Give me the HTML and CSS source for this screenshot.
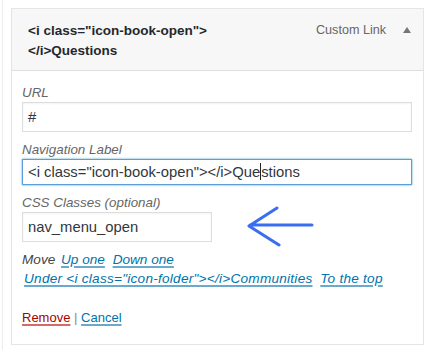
FILE: index.html
```html
<!DOCTYPE html>
<html lang="en">
<head>
    <meta charset="UTF-8">
    <meta name="viewport" content="width=device-width, initial-scale=1.0">
    <title>Menu item</title>
    <link rel="stylesheet" href="styles.css">
</head>
<body>
    <div class="page">
        <div class="menu-item">
            <div class="item-bar">
                <span class="item-title">&lt;i class="icon-book-open"&gt;<wbr>&lt;/i&gt;Questions</span>
                <span class="item-type">Custom Link</span>
                <span class="item-toggle"></span>
            </div>

            <div class="item-settings">
                <label class="field-label">URL</label>
                <div class="field-input">#</div>

                <label class="field-label">Navigation Label</label>
                <div class="field-input focused">&lt;i class="icon-book-open"&gt;&lt;/i&gt;Que<span class="caret"></span>stions</div>

                <label class="field-label">CSS Classes (optional)</label>
                <div class="css-row">
                    <div class="field-input short">nav_menu_open</div>
                    <svg class="arrow" width="68" height="42" viewBox="0 0 68 42">
                        <path d="M66 19 H4 M31 2 L3 20 L33 39" fill="none" stroke="#3a6df0" stroke-width="3" stroke-linecap="round" stroke-linejoin="round"/>
                    </svg>
                </div>

                <div class="move-links">
                    <span>Move</span>
                    <a href="#">Up one</a>
                    <a href="#">Down one</a>
                    <a href="#" class="wide">Under &lt;i class="icon-folder"&gt;&lt;/i&gt;Communities</a>
                    <a href="#" class="wide">To the top</a>
                </div>

                <div class="item-actions">
                    <a href="#" class="remove">Remove</a>
                    <span class="sep">|</span>
                    <a href="#">Cancel</a>
                </div>
            </div>
        </div>
    </div>
</body>
</html>
```

FILE: styles.css
```css
body {
    margin: 0;
    background: #fff;
    font-family: 'Liberation Sans', Arial, sans-serif;
    color: #23282d;
}

.page {
    margin-left: 2px;
    border-left: 1px solid #ececec;
    padding: 8px 0 0 8px;
    min-height: 100vh;
    box-sizing: border-box;
}

.menu-item {
    width: 413px;
    border: 1px solid #e5e5e5;
    box-sizing: border-box;
}

/* Header bar */
.item-bar {
    display: flex;
    align-items: flex-start;
    background: #f7f7f7;
    border-bottom: 1px solid #dfdfdf;
    padding: 11px 0 9px 16px;
}

.item-title {
    font-size: 13.5px;
    font-weight: bold;
    line-height: 20px;
    max-width: 200px;
    flex: 1;
    padding-top: 1px;
}

.item-type {
    margin-left: auto;
    font-size: 12.6px;
    line-height: 20px;
    color: #666;
}

.item-toggle {
    width: 0;
    height: 0;
    margin: 7px 12px 0 17px;
    border-left: 4px solid transparent;
    border-right: 4px solid transparent;
    border-bottom: 6px solid #72777c;
}

/* Settings */
.item-settings {
    padding: 12px 11px 17px 10px;
}

.field-label {
    display: block;
    font-size: 13.4px;
    font-style: italic;
    line-height: 19px;
    color: #666;
}

.field-input {
    height: 30px;
    box-sizing: border-box;
    border: 1px solid #ddd;
    box-shadow: inset 0 1px 2px rgba(0, 0, 0, 0.05);
    padding: 0 5px;
    font-size: 14.8px;
    line-height: 28px;
    color: #32373c;
    margin-bottom: 8px;
}

.field-input.focused {
    height: 26px;
    line-height: 24px;
    border-color: #5b9dd9;
    box-shadow: 0 0 2px rgba(30, 140, 190, 0.8);
}

.caret {
    display: inline-block;
    width: 1px;
    height: 17px;
    background: #222;
    vertical-align: -3px;
}

.css-row {
    display: flex;
    align-items: center;
}

.field-input.short {
    width: 190px;
    margin-bottom: 0;
}

.arrow {
    margin: -6px 0 -6px 34px;
}

.move-links {
    font-size: 13.6px;
    font-style: italic;
    line-height: 19px;
    color: #444;
    margin-top: 8px;
}

.move-links a {
    margin: 0 2px;
    white-space: nowrap;
}

.move-links a.wide {
    letter-spacing: 0.25px;
}

a {
    color: #0073aa;
    text-decoration-color: #6aa9cc;
    text-decoration-thickness: 2px;
    text-underline-offset: 2px;
}

.item-actions {
    margin-top: 20px;
    font-size: 13px;
    line-height: 19px;
}

.item-actions .remove {
    color: #a00;
    text-decoration-color: #d46a6a;
}

.sep {
    color: #888;
}
```
